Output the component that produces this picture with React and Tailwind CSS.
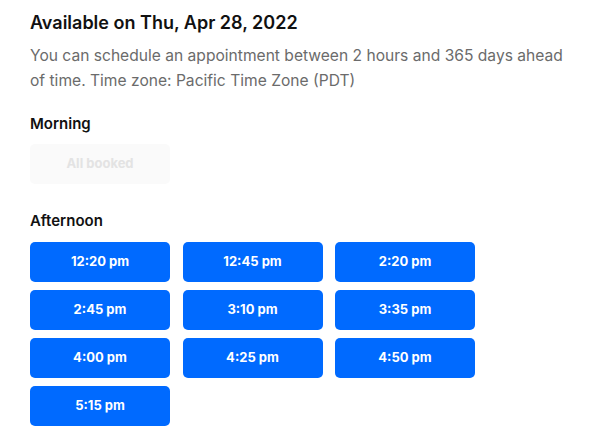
const AFTERNOON = ['12:20 pm', '12:45 pm', '2:20 pm', '2:45 pm', '3:10 pm', '3:35 pm', '4:00 pm', '4:25 pm', '4:50 pm', '5:15 pm']

export default function App() {
  return (
    <div className="min-h-[445px] bg-white pl-[30px] pr-[10px] pt-[11px] text-black" style={{ fontFamily: 'Inter, "Noto Sans", sans-serif' }}>
      <h2 className="text-[18px] leading-[24px] font-semibold text-[#111]">Available on Thu, Apr 28, 2022</h2>
      <p className="mt-[8px] text-[15.6px] leading-[25px] text-[#6b6b6b] max-w-[545px]">
        You can schedule an appointment between 2 hours and 365 days ahead of time. Time zone: Pacific Time Zone (PDT)
      </p>

      <h3 className="mt-[21px] text-[15px] leading-[20px] font-semibold text-[#111]">Morning</h3>
      <div className="mt-[10px] w-[140px] h-[40px] rounded-[5px] bg-[#fafafa] flex items-center justify-center text-[13px] font-bold text-[#e3e3e3]">
        All booked
      </div>

      <h3 className="mt-[27px] text-[15px] leading-[20px] font-semibold text-[#111]">Afternoon</h3>
      <div className="mt-[11px] grid grid-cols-[repeat(3,140px)] gap-x-[12.5px] gap-y-[8px]">
        {AFTERNOON.map(t => (
          <button
            key={t}
            type="button"
            className="h-[40px] rounded-[5px] bg-[#006aff] text-white text-[13px] font-bold"
          >
            {t}
          </button>
        ))}
      </div>
    </div>
  )
}
